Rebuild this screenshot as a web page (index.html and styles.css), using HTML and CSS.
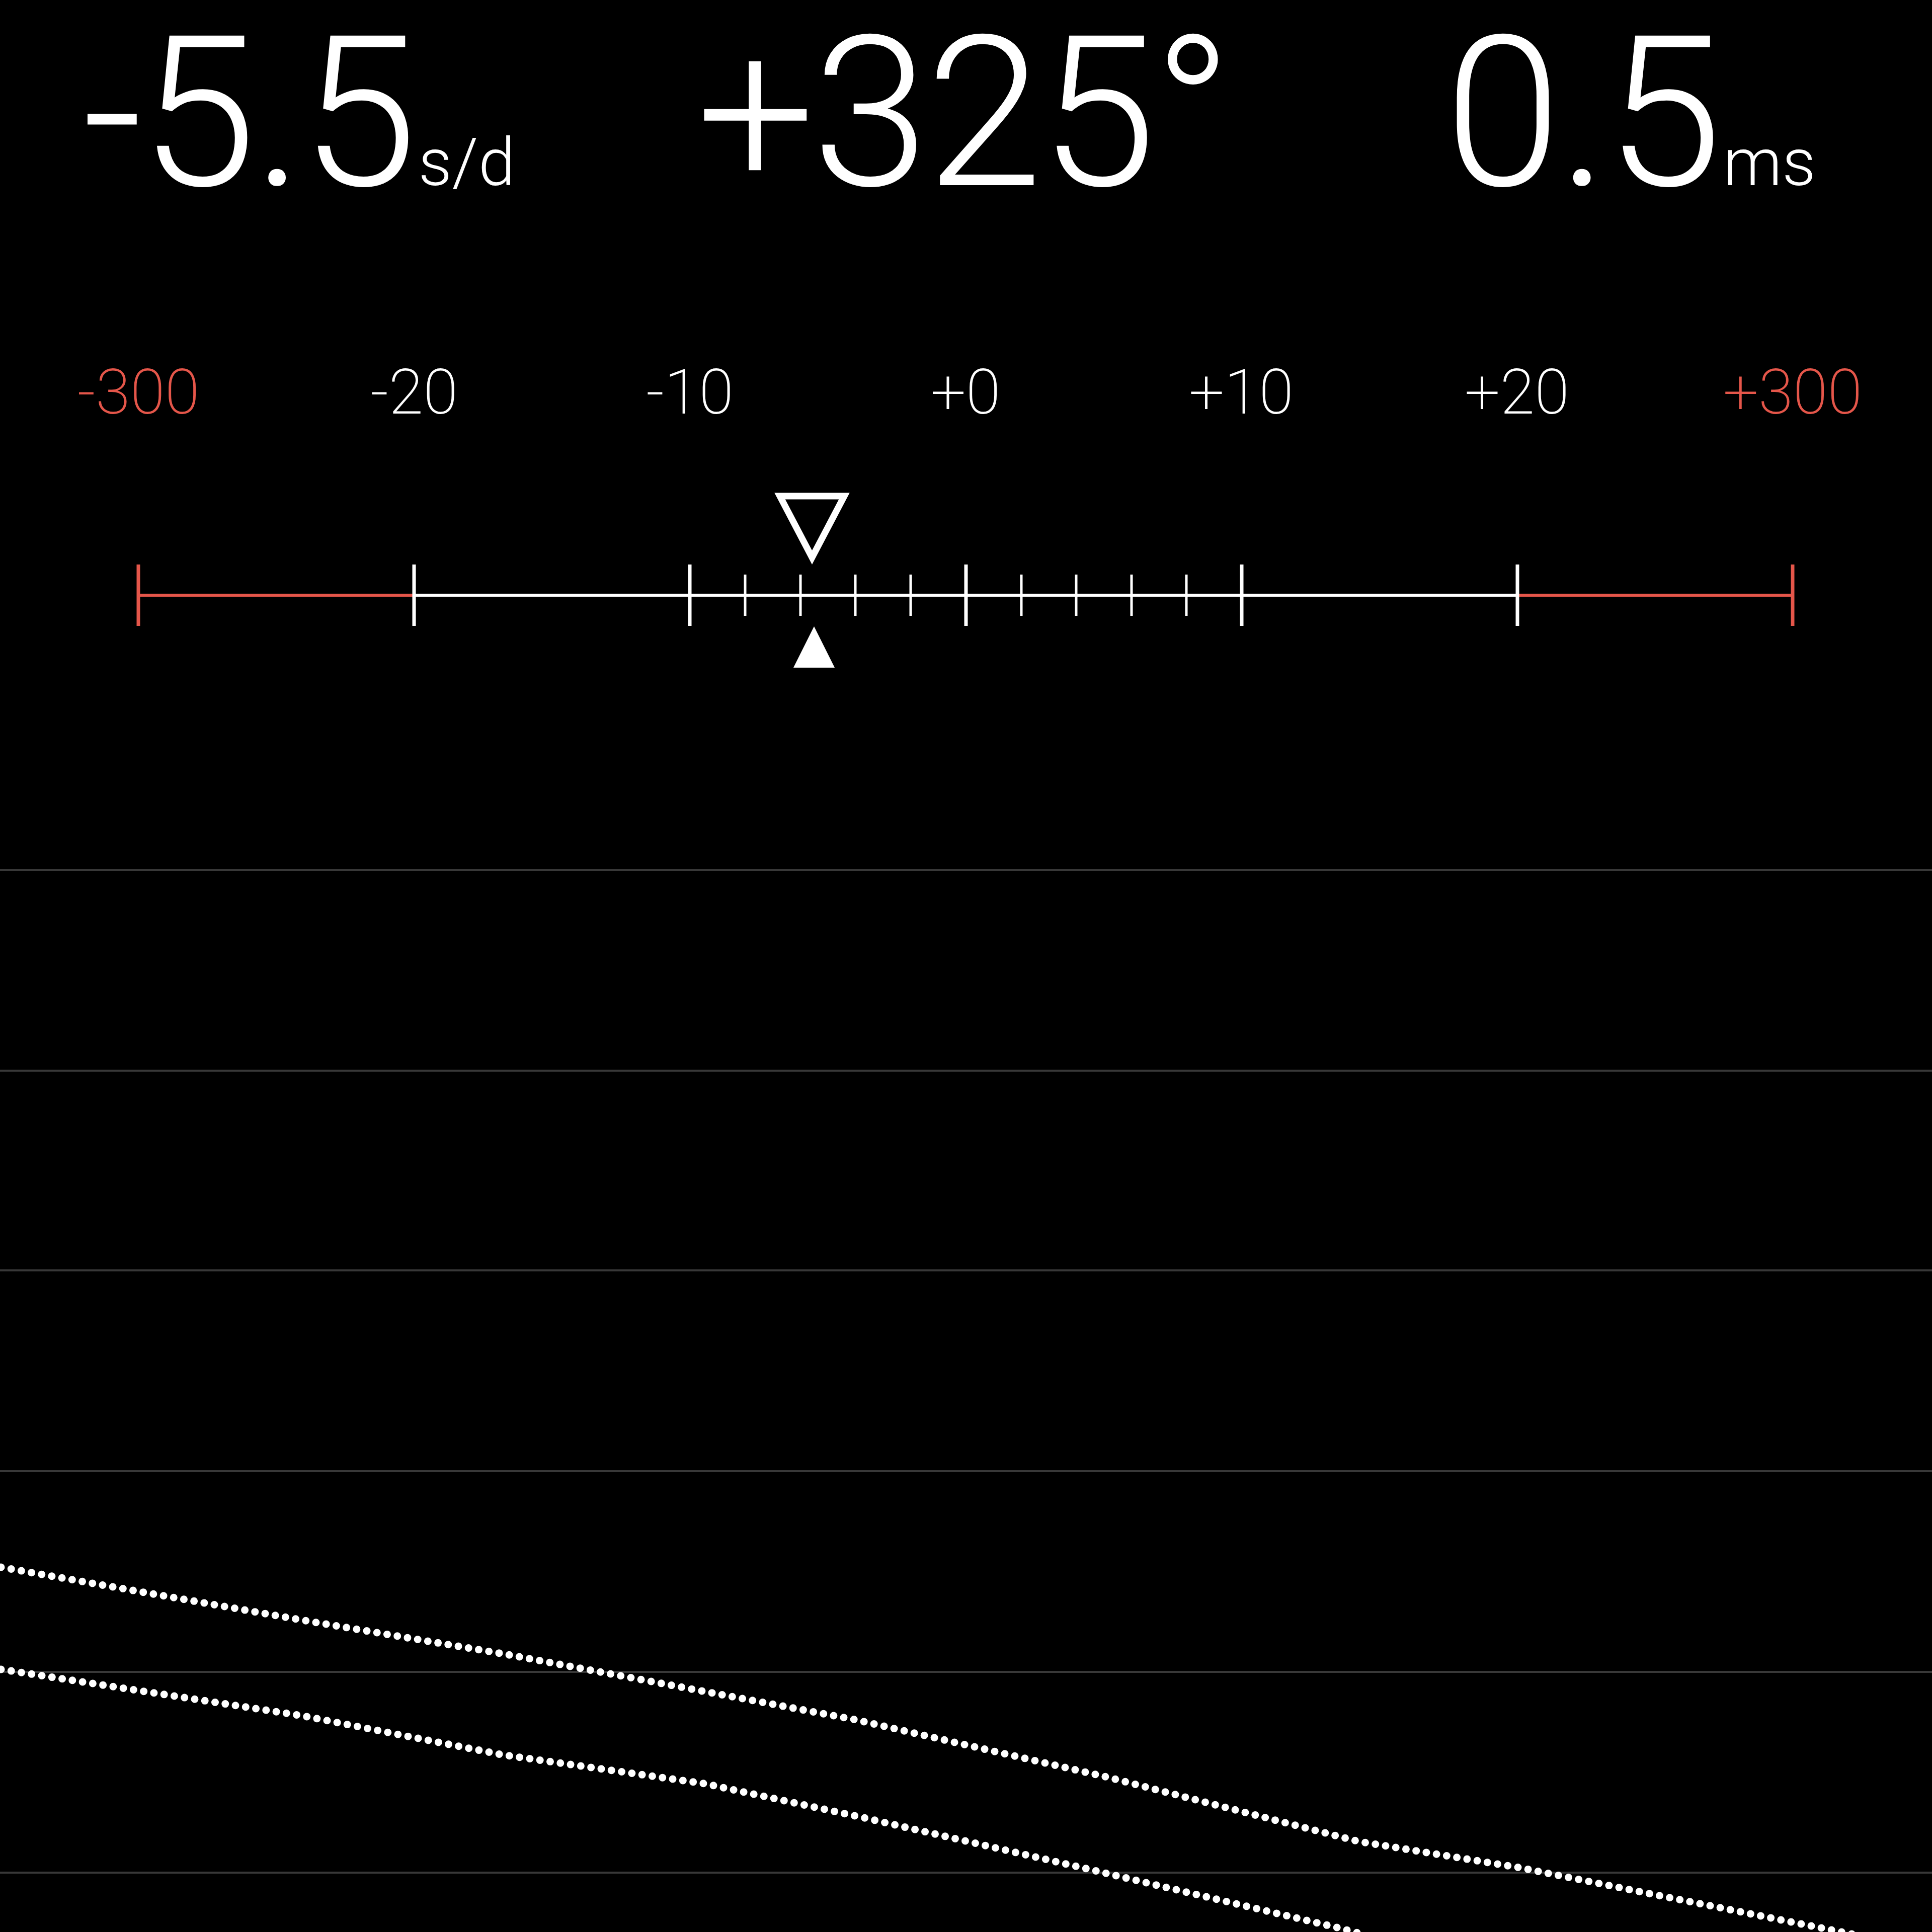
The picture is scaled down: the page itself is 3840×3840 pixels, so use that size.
FILE: index.html
```html
<!DOCTYPE html>
<html lang="en">
    <head>
        <meta charset="UTF-8" />
        <title>Timegrapher</title>
        <link rel="stylesheet" href="styles.css">
    </head>
    <body>
        <div class="readings">
            <div class="reading">-5.5<span class="unit">s/d</span></div>
            <div class="reading">+325°</div>
            <div class="reading">0.5<span class="unit">ms</span></div>
        </div>

        <div class="labels">
            <div class="label red">-300</div>
            <div class="label">-20</div>
            <div class="label">-10</div>
            <div class="label">+0</div>
            <div class="label">+10</div>
            <div class="label">+20</div>
            <div class="label red">+300</div>
        </div>

        <svg class="scale" viewBox="0 960 3840 380" preserveAspectRatio="none">
            <!-- pointer: average rate -->
            <polygon class="pointer-hollow" points="1550,986 1678,986 1614,1108" />

            <line class="bar red" x1="275" y1="1183" x2="823" y2="1183" />
            <line class="bar" x1="823" y1="1183" x2="3016" y2="1183" />
            <line class="bar red" x1="3016" y1="1183" x2="3563" y2="1183" />

            <g class="major">
                <line class="red" x1="275" y1="1122" x2="275" y2="1244" />
                <line x1="823" y1="1122" x2="823" y2="1244" />
                <line x1="1371" y1="1122" x2="1371" y2="1244" />
                <line x1="1920" y1="1122" x2="1920" y2="1244" />
                <line x1="2468" y1="1122" x2="2468" y2="1244" />
                <line x1="3016" y1="1122" x2="3016" y2="1244" />
                <line class="red" x1="3563" y1="1122" x2="3563" y2="1244" />
            </g>
            <g class="minor">
                <line x1="1481" y1="1142" x2="1481" y2="1224" />
                <line x1="1591" y1="1142" x2="1591" y2="1224" />
                <line x1="1700" y1="1142" x2="1700" y2="1224" />
                <line x1="1810" y1="1142" x2="1810" y2="1224" />
                <line x1="2030" y1="1142" x2="2030" y2="1224" />
                <line x1="2139" y1="1142" x2="2139" y2="1224" />
                <line x1="2249" y1="1142" x2="2249" y2="1224" />
                <line x1="2358" y1="1142" x2="2358" y2="1224" />
            </g>

            <!-- pointer: current rate -->
            <polygon class="pointer-solid" points="1618,1245 1577,1327 1659,1327" />
        </svg>

        <svg class="chart" viewBox="0 1340 3840 2500" preserveAspectRatio="none">
            <g class="grid">
                <line x1="0" y1="1729" x2="3840" y2="1729" />
                <line x1="0" y1="2128" x2="3840" y2="2128" />
                <line x1="0" y1="2525" x2="3840" y2="2525" />
                <line x1="0" y1="2924" x2="3840" y2="2924" />
                <line x1="0" y1="3323" x2="3840" y2="3323" />
                <line x1="0" y1="3722" x2="3840" y2="3722" />
            </g>
            <polyline class="trace" points="2,3115 600,3220 1000,3287 1700,3418 2200,3532 2700,3660 3020,3712 3700,3848" />
            <polyline class="trace" points="2,3318 600,3410 1000,3488 1400,3545 1713,3612 2159,3714 2657,3831 2700,3842" />
        </svg>
    </body>
</html>
```

FILE: styles.css
```css
html {
    --bg-color: #000;
    --fg-color: #fff;
    --warn-color: #e5564a;
    --grid-color: #383838;
}

* {
    box-sizing: border-box;
}

body {
    margin: 0;
    width: 3840px;
    height: 3840px;
    overflow: hidden;
    background-color: var(--bg-color);
    color: var(--fg-color);
    font-family: "Roboto", "Liberation Sans", sans-serif;
    display: flex;
    flex-direction: column;
}

.readings {
    display: grid;
    grid-template-columns: 1188px 1452px 1200px;
    padding-top: 16px;
    height: 600px;
}

.reading {
    text-align: center;
    font-size: 418px;
    font-weight: 300;
    line-height: 1;
    letter-spacing: -6px;
    white-space: nowrap;
}

.unit {
    font-size: 132px;
    font-weight: 300;
    letter-spacing: 0;
    margin-left: 8px;
}

.labels {
    display: grid;
    grid-template-columns: repeat(7, 548px);
    padding-left: 1px;
    height: 360px;
}

.label {
    text-align: center;
    font-size: 125px;
    font-weight: 200;
    line-height: 1;
    padding-top: 117px;
}

.label.red {
    color: var(--warn-color);
}

.scale {
    display: block;
    width: 3840px;
    height: 380px;
    flex-shrink: 0;
}

.scale .bar {
    stroke: var(--fg-color);
    stroke-width: 6;
}

.scale .major line {
    stroke: var(--fg-color);
    stroke-width: 7;
}

.scale .minor line {
    stroke: var(--fg-color);
    stroke-width: 5;
}

.scale .red,
.scale .major .red {
    stroke: var(--warn-color);
}

.pointer-hollow {
    fill: none;
    stroke: var(--fg-color);
    stroke-width: 13;
    stroke-linejoin: miter;
}

.pointer-solid {
    fill: var(--fg-color);
}

.chart {
    display: block;
    width: 3840px;
    height: 2500px;
    flex-shrink: 0;
}

.grid line {
    stroke: var(--grid-color);
    stroke-width: 4;
}

.trace {
    fill: none;
    stroke: var(--fg-color);
    stroke-width: 15;
    stroke-linecap: round;
    stroke-dasharray: 0 20.5;
}
```
